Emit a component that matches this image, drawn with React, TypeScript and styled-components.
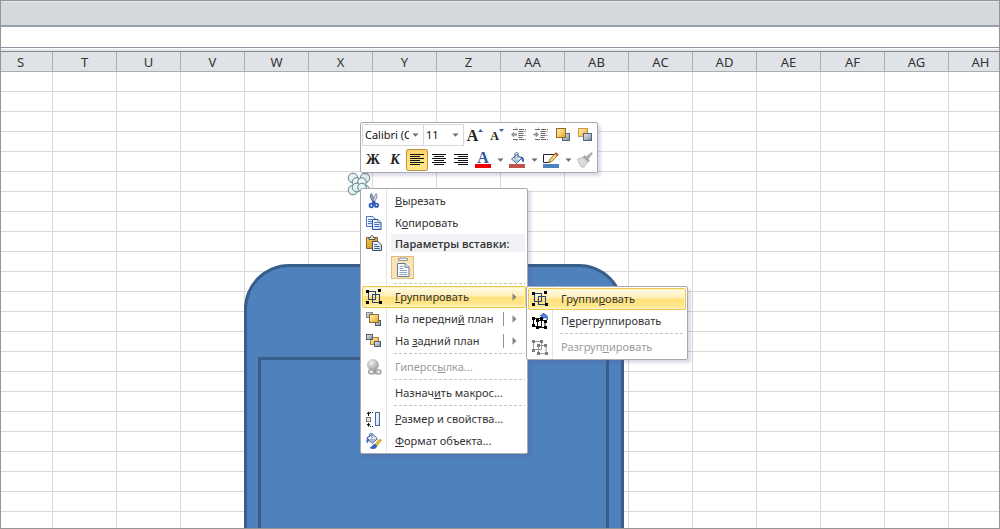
import React from "react";
import styled, { createGlobalStyle, css } from "styled-components";

const GlobalStyle = createGlobalStyle`
  *, *::before, *::after { box-sizing: border-box; }
  body { margin: 0; background: #fff; font-family: "Noto Sans", "Open Sans", sans-serif; color: #333; }
  button, select { font: inherit; color: inherit; margin: 0; padding: 0; border: 0; background: none; }
  svg { display: block; flex: none; }
`;

/* ---------- window and sheet ---------- */

const Window = styled.div`
  position: relative;
  display: flex;
  flex-direction: column;
  height: 100vh;
  overflow: hidden;
  border: 1px solid #959595;
`;

const Ribbon = styled.header`
  flex: none;
  height: 26px;
  background: #d5d8dd;
  border-top: 1px solid #e4e7ea;
  border-bottom: 2px solid #98a0aa;
`;

const FormulaBar = styled.div`
  flex: none;
  height: 21px;
  background: #fff;
  border-bottom: 1px solid #9093a0;
`;

const Splitter = styled.div`
  flex: none;
  height: 4px;
  background: #e6e6f0;
  border-top: 1px solid #fff;
  border-bottom: 1px solid #85868c;
`;

const Sheet = styled.main`
  flex: 1;
  min-height: 0;
  overflow: hidden;
`;

const Grid = styled.table`
  width: 1024px;
  margin-left: -12px;
  table-layout: fixed;
  border-collapse: separate;
  border-spacing: 0;
`;

const ColumnHead = styled.th`
  width: 64px;
  height: 20px;
  padding: 1px 0 0;
  background: #dfe2e6;
  border-right: 1px solid #a9adb3;
  border-bottom: 1px solid #a9adb3;
  font-size: 13px;
  line-height: 18px;
  font-weight: 400;
  text-align: center;
`;

const Cell = styled.td`
  height: 20px;
  padding: 0;
  border-right: 1px solid #d9d9d9;
  border-bottom: 1px solid #d9d9d9;
`;

/* ---------- drawn objects on the sheet ---------- */

const OuterShape = styled.div`
  position: absolute;
  left: 243px;
  top: 263px;
  bottom: 0;
  width: 380px;
  border: 3px solid #385d8a;
  border-bottom: 0;
  border-radius: 45px 45px 0 0;
  background: #4f81bd;
`;

const InnerShape = styled.div`
  position: absolute;
  left: 11px;
  top: 90px;
  bottom: 0;
  width: 351px;
  border: 3px solid #385d8a;
  border-bottom: 0;
`;

const SelectionHandle = styled.svg`
  position: absolute;
  left: 346px;
  top: 170px;
`;

/* ---------- popups ---------- */

const popup = css`
  position: absolute;
  background: #fff;
  border: 1px solid #a7abb0;
  border-radius: 2px;
  box-shadow: 3px 3px 3px rgba(90, 80, 140, 0.2);
`;

const MiniToolbar = styled.div`
  ${popup}
  left: 359px;
  top: 121px;
  padding: 1px;
  display: flex;
  flex-direction: column;
  gap: 3px;
`;

const ToolRow = styled.div`
  display: flex;
  align-items: center;
  height: 22px;
`;

const SelectBox = styled.label<{ $width: number }>`
  position: relative;
  display: flex;
  align-items: center;
  width: ${(p) => p.$width}px;
  height: 22px;
  border: 1px solid #d5d9de;
  & + & { border-left: 0; }
  svg { position: absolute; right: 4px; pointer-events: none; }
`;

const Select = styled.select`
  appearance: none;
  width: 100%;
  height: 20px;
  padding: 0 14px 0 2px;
  font-size: 11px;
  line-height: 20px;
  color: #111;
  outline: none;
`;

const ToolButton = styled.button<{ $active?: boolean; $narrow?: boolean }>`
  display: flex;
  align-items: center;
  justify-content: center;
  width: ${(p) => (p.$narrow ? 12 : 22)}px;
  height: 22px;
  border-radius: 2px;
  ${(p) =>
    p.$active &&
    css`
      border: 1px solid #c2923a;
      background: linear-gradient(#fbd46d, #fce07f 50%, #ffe68a);
    `}
`;

const Glyph = styled.span<{ $size: number; $italic?: boolean }>`
  font-family: "Liberation Serif", serif;
  font-size: ${(p) => p.$size}px;
  line-height: 20px;
  font-weight: 700;
  font-style: ${(p) => (p.$italic ? "italic" : "normal")};
  color: #222;
`;

const SizeGlyph = styled.span`
  display: flex;
  align-items: flex-start;
  padding-top: 1px;
  svg { margin-top: 3px; }
`;

const ColorGlyph = styled.span`
  display: flex;
  flex-direction: column;
  align-items: center;
  width: 16px;
  border-bottom: 4px solid #f00000;
  font-family: "Liberation Serif", serif;
  font-size: 16px;
  line-height: 12px;
  font-weight: 700;
  color: #2e55a0;
`;

const Menu = styled.div<{ $left: number; $top: number; $width: number }>`
  ${popup}
  left: ${(p) => p.$left}px;
  top: ${(p) => p.$top}px;
  width: ${(p) => p.$width}px;
  padding: 1px;
  background: linear-gradient(90deg, #fff 25px, #e2e4e7 25px, #e2e4e7 26px, #fff 26px);
`;

const Item = styled.button<{ $hot?: boolean }>`
  display: flex;
  align-items: center;
  width: 100%;
  height: 22px;
  padding: 0 8px 0 3px;
  border: 1px solid transparent;
  border-radius: 2px;
  font-size: 11px;
  line-height: 20px;
  text-align: left;
  white-space: nowrap;
  &:disabled { color: #9b9b9b; }
  ${(p) =>
    p.$hot &&
    css`
      border-color: #edc64b;
      background: linear-gradient(#fffbea, #fff0b5 45%, #ffe17a 50%, #ffe68c 85%, #fff3b8);
      box-shadow: inset 0 0 0 1px #fff4c4;
    `}
`;

const IconSlot = styled.span`
  flex: none;
  width: 29px;
  height: 16px;
`;

const Label = styled.span`
  flex: 1;
`;

const SplitMark = styled.span`
  width: 1px;
  height: 14px;
  margin-right: 8px;
  background: #8d939b;
`;

const Heading = styled.div`
  display: flex;
  align-items: center;
  height: 18px;
  padding-left: 4px;
  font-family: "Open Sans", "Noto Sans", sans-serif;
  font-size: 11px;
  font-weight: 600;
`;

const HeadingText = styled.span`
  flex: 1;
  margin-left: -4px;
  padding: 2px 0 0 4px;
  margin-right: 1px;
  background: #f0f2f5;
  line-height: 16px;
  white-space: nowrap;
`;

const PasteRow = styled.div`
  height: 30px;
  padding: 4px 0 0 29px;
`;

const PasteButton = styled.button`
  display: flex;
  align-items: center;
  justify-content: center;
  width: 23px;
  height: 23px;
  border: 1px solid #e3bd80;
  background: #fbe3b8;
`;

const Separator = styled.hr`
  height: 4px;
  margin: 0 1px 0 32px;
  border: 0;
  background: repeating-linear-gradient(90deg, #c5c5c5 0 3px, transparent 3px 5px) 0 1px / 100% 1px no-repeat;
`;

/* ---------- icons ---------- */

type IconProps = { children: React.ReactNode };
const Icon = ({ children }: IconProps) => (
  <svg width="16" height="16" viewBox="0 0 16 16" aria-hidden="true">
    {children}
  </svg>
);

const DefsSvg = styled.svg`
  position: absolute;
`;

const Gradients = () => (
  <DefsSvg width="0" height="0" aria-hidden="true">
    <defs>
      <linearGradient id="gold" x1="0" y1="0" x2="1" y2="1">
        <stop offset="0" stopColor="#fff0b8" />
        <stop offset="0.5" stopColor="#f8cf6c" />
        <stop offset="1" stopColor="#d99a22" />
      </linearGradient>
      <linearGradient id="board" x1="0" y1="0" x2="1" y2="1">
        <stop offset="0" stopColor="#f7cf55" />
        <stop offset="1" stopColor="#c0831c" />
      </linearGradient>
      <linearGradient id="steel" x1="0" y1="0" x2="1" y2="1">
        <stop offset="0" stopColor="#e8ecf1" />
        <stop offset="1" stopColor="#7e8a9b" />
      </linearGradient>
      <linearGradient id="paper" x1="0" y1="0" x2="1" y2="1">
        <stop offset="0" stopColor="#fff" />
        <stop offset="1" stopColor="#c3daf6" />
      </linearGradient>
      <radialGradient id="ball" cx="0.35" cy="0.3" r="0.75">
        <stop offset="0" stopColor="#f2f2f2" />
        <stop offset="1" stopColor="#9a9a9a" />
      </radialGradient>
      <radialGradient id="bubble" cx="0.45" cy="0.4" r="0.7">
        <stop offset="0" stopColor="#f0fbfc" />
        <stop offset="1" stopColor="#c9e9ee" />
      </radialGradient>
    </defs>
  </DefsSvg>
);

const Caret = () => (
  <svg width="7" height="4" viewBox="0 0 7 4" aria-hidden="true">
    <path d="M0.500 0.500h6L3.500 3.800z" fill="#6b6b6b" />
  </svg>
);

const SubmenuArrow = () => (
  <svg width="5" height="8" viewBox="0 0 5 8" aria-hidden="true">
    <path d="M0.500 0.300v7.400L4.500 4z" fill="#858585" />
  </svg>
);

const ScissorsIcon = () => (
  <Icon>
    <path d="M4.500 1l1.200-0.200L8.800 8l-1.500 1.500L4.300 4.500z" fill="#8fa0b8" stroke="#4f6482" strokeWidth="0.7" />
    <path d="M10.800 1L9.600 0.800 6.500 8l1.500 1.500 3-5z" fill="#d4dce7" stroke="#5b6d87" strokeWidth="0.7" />
    <path d="M8.600 8l-2.400 3M6.800 8l2.600 3" stroke="#2350a8" strokeWidth="2" />
    <circle cx="5.300" cy="12.500" r="1.800" fill="#dce8fa" stroke="#2f5bb7" strokeWidth="1.700" />
    <circle cx="10.500" cy="12.200" r="1.700" fill="#dce8fa" stroke="#2f5bb7" strokeWidth="1.700" />
  </Icon>
);

const CopyIcon = () => (
  <Icon>
    <path d="M0.500 1.500h6.500l2.500 2.500V11.500h-9z" fill="url(#paper)" stroke="#4f78bf" />
    <path d="M2 4.500h4M2 6.500h4M2 8.500h4" stroke="#4f7cc4" />
    <path d="M6.500 4.500h5.500l3 3v7H6.500z" fill="url(#paper)" stroke="#2b529a" />
    <path d="M12 4.500v3h3" fill="#fff" stroke="#2b529a" strokeWidth="0.800" />
    <path d="M8.200 7.500h3M8.200 9.500h5.200M8.200 11.500h5.200" stroke="#3f6fba" />
  </Icon>
);

const PasteIcon = () => (
  <Icon>
    <path d="M0.500 2.500h11v11h-11z" fill="url(#board)" stroke="#94641a" />
    <path d="M3 4.500V2.500h1.500c0-2.600 3-2.600 3 0H9v2z" fill="#dfe2e6" stroke="#4e4a42" strokeWidth="0.900" />
    <path d="M6.500 6.500h5.400l3.600 3.300v5.700h-9z" fill="url(#paper)" stroke="#3b4f73" />
    <path d="M8.200 9.500h3M8.200 11.500h5.600M8.200 13.500h5.600" stroke="#4d6188" />
  </Icon>
);

const PasteOptionIcon = () => (
  <svg width="18" height="22" viewBox="0 0 18 22" aria-hidden="true">
    <path d="M4.500 3.500V1.500h2.500c0-2.600 4-2.600 4 0h2.500v2z" fill="#f7f8f9" stroke="#83919b" strokeWidth="0.900" />
    <rect x="8.300" y="0.800" width="1.400" height="1.400" fill="#83919b" />
    <path d="M3.500 6.500h7.500l4 3.800v9.200H3.500z" fill="#fff" stroke="#5f789e" strokeWidth="1" />
    <path d="M11 6.500v3.800h4" fill="#dde7f3" stroke="#5f789e" strokeWidth="0.900" />
    <path d="M5.500 9.500h4M5.500 11.500h4M5.500 13.500h7.500M5.500 15.500h7.500M5.500 17.500h7.500" stroke="#8398ba" strokeWidth="0.900" />
  </svg>
);

const GroupIcon = () => (
  <Icon>
    <path d="M2.500 2.500h7v8h-7zM6.500 5.500h7v8h-7z" fill="none" stroke="#2b4472" strokeWidth="1.100" />
    <path d="M0 1h3v3H0zM12 0h3v3h-3zM0 12h3v3H0zM13 12h3v3h-3z" fill="#000" />
  </Icon>
);

const RegroupIcon = () => (
  <Icon>
    <path d="M1.500 5.500h8v8h-8zM5.500 7.500h7.500v7H5.500z" fill="#fff" stroke="#111" strokeWidth="1" />
    <path d="M0 4h3v3H0zM0 11h3v3H0zM8 4h3v3H8zM4 6h3v3H4zM12 7h3v3h-3zM4 13h3v3H4zM12 13h3v3h-3z" fill="#000" />
    <path d="M8.500 2.500L12 0v1.300c3 0 4.300 2.600 3.300 5.700-0.600-2-1.600-2.600-3.300-2.600V5.500z" fill="#4d83db" stroke="#2450a4" strokeWidth="0.700" />
  </Icon>
);

const UngroupIcon = () => (
  <Icon>
    <path d="M1.500 2.500h8v8h-8zM6.500 6.500h7.500v8H6.500z" fill="#fff" stroke="#999" strokeWidth="1" />
    <path d="M0 1h3v3H0zM8 1h3v3H8zM0 10h3v3H0zM5 5h3v3H5zM12 5h3v3h-3zM5 13h3v3H5zM13 13h3v3h-3z" fill="#7e7e7e" />
  </Icon>
);

const FrontIcon = () => (
  <Icon>
    <rect x="0.500" y="1.500" width="6" height="5" fill="url(#steel)" stroke="#7e8a9b" />
    <rect x="9.500" y="9.500" width="5" height="5" fill="url(#steel)" stroke="#4d5868" />
    <rect x="3.500" y="3.500" width="9" height="8" fill="url(#gold)" stroke="#8f6f30" />
  </Icon>
);

const BackIcon = () => (
  <Icon>
    <rect x="4.500" y="4.500" width="8" height="7" fill="url(#gold)" stroke="#b98426" />
    <rect x="0.500" y="1.500" width="6" height="5" fill="url(#steel)" stroke="#4f6078" />
    <rect x="8.500" y="8.500" width="6" height="5" fill="url(#steel)" stroke="#4f6078" />
  </Icon>
);

const HyperlinkIcon = () => (
  <Icon>
    <circle cx="7" cy="6" r="5.500" fill="url(#ball)" stroke="#b0b0b0" strokeWidth="0.600" />
    <rect x="2.500" y="10.800" width="6.500" height="4" rx="2" fill="#ebebeb" stroke="#999" strokeWidth="1.200" />
    <rect x="9" y="10.800" width="6" height="4" rx="2" fill="#ebebeb" stroke="#999" strokeWidth="1.200" />
    <path d="M6.500 12.800h5" stroke="#999" strokeWidth="1.200" />
  </Icon>
);

const SizeIcon = () => (
  <Icon>
    <rect x="9.500" y="1.500" width="4" height="13" fill="url(#paper)" stroke="#4a6797" />
    <rect x="0.500" y="6.500" width="4" height="4" fill="#e9e9e9" stroke="#777" />
    <path d="M2.500 1v4M2.500 12v3.500" stroke="#111" strokeWidth="1" />
    <path d="M0.500 3L2.500 0.500l2 2.500zM0.500 13l2 2.500 2-2.500z" fill="#111" />
    <path d="M4 1.500h4M4 15.500h4" stroke="#111" strokeDasharray="1 1" />
  </Icon>
);

const Bucket = () => (
  <>
    <path d="M2.500 7L8 2.500l4.500 4L7.500 11.500z" fill="#e4ebf5" stroke="#3d5c92" strokeWidth="1" />
    <path d="M4.500 7.500h6.500L7.500 10.500z" fill="#a9bbd6" />
    <path d="M6 7V2c0-2 3-2 3 0v4" fill="none" stroke="#4b6796" strokeWidth="1" />
    <path d="M11.500 4.500c3 0 4 2.300 3.300 6-1.800-0.600-2.300-2.200-2.300-4z" fill="#2f64bd" />
  </>
);

const FormatIcon = () => (
  <Icon>
    <path d="M1 4.800L6.500 1l5 4.700L6 10.500z" fill="#e4ebf5" stroke="#3d5c92" strokeWidth="1" />
    <path d="M3 6h7L6 9.500z" fill="#a3b4cf" />
    <path d="M3.500 4V1.200c0-1.300 2.500-1.300 2.500 0v4" fill="none" stroke="#5675a7" strokeWidth="1" />
    <path d="M1 5c-1.300 3-0.500 4 0.500 5.500L3 7.500z" fill="#3f73c9" />
    <path d="M15.600 7l-2.400-0.500L8.800 11.500l2 1.800z" fill="#f1bc36" stroke="#b27d16" strokeWidth="0.600" />
    <path d="M4 14.800c2.500-0.300 2.500-3.500 4.800-3.500l2 1.800c-0.500 2.700-4 3.200-6.800 1.700z" fill="#2e67c8" stroke="#1f4793" strokeWidth="0.600" />
  </Icon>
);

const FillIcon = () => (
  <Icon>
    <Bucket />
    <path d="M0 12h16v4H0z" fill="#c0504d" />
  </Icon>
);

const OutlineIcon = () => (
  <Icon>
    <path d="M0.500 2.500h11.500L5.500 10.500h-5z" fill="#fff" stroke="#222" />
    <path d="M12.800 0.600l2.600 2-6.600 7-3 1.200 0.700-3z" fill="#f6cf6a" stroke="#6b5220" strokeWidth="0.700" />
    <path d="M12.800 0.600l2.600 2-1.400 1.600-2.500-2.100z" fill="#cf5b4c" />
    <path d="M0 12h16v4H0z" fill="#4f81bd" />
  </Icon>
);

const BrushIcon = () => (
  <Icon>
    <path d="M15.500 1.300l-1-0.900-5 4.200 2 2z" fill="#b5b5b5" stroke="#9a9a9a" strokeWidth="0.700" />
    <path d="M7.500 3.600l5.200 4.800-1.500 1.400-5.200-4.800z" fill="#a8a8a8" stroke="#939393" strokeWidth="0.600" />
    <path d="M6 5L0.500 7l3 7.500 3.200 1L11.200 9.800z" fill="#d2d2d2" stroke="#b3b3b3" strokeWidth="0.600" />
    <path d="M2.500 7.500l3 5.500M4.500 6.500l3 5" stroke="#eee" strokeWidth="1" />
  </Icon>
);

const ForwardIcon = () => (
  <Icon>
    <rect x="7.500" y="6.500" width="7" height="7" fill="url(#steel)" stroke="#56657b" />
    <rect x="1.500" y="1.500" width="9" height="9" fill="url(#gold)" stroke="#8f6d29" />
  </Icon>
);

const BackwardIcon = () => (
  <Icon>
    <rect x="1.500" y="1.500" width="9" height="8" fill="url(#gold)" stroke="#c99a45" />
    <rect x="6.500" y="6.500" width="8" height="7" fill="url(#steel)" stroke="#56657b" />
  </Icon>
);

const IndentIcon = ({ increase }: { increase?: boolean }) => (
  <Icon>
    <path d="M2 2.500h13M7.500 4.500h7M7.500 6.500h5M7.500 8.500h7M7.500 10.500h4M2 12.500h13" stroke="#666" strokeDasharray="5 1" />
    <path d={increase ? "M6 7.500L2.800 4.500v2H0.500v2h2.300v2z" : "M0 7.500L3.200 4.500v2H6v2H3.200v2z"} fill="#929292" />
    <path d="M5.500 0.500v2M5.500 12.500v2" stroke="#999" strokeDasharray="1 1" />
  </Icon>
);

const AlignIcon = ({ side }: { side: "left" | "center" | "right" }) => (
  <Icon>
    {[14, 10, 14, 10, 14, 10].map((w, i) => {
      const x = side === "left" ? 1 : side === "right" ? 15 - w : 8 - w / 2;
      return <rect key={i} x={x} y={2 + i * 2} width={w} height="1" fill="#111" />;
    })}
  </Icon>
);

const Triangle = ({ down }: { down?: boolean }) => (
  <svg width="5" height="3" viewBox="0 0 5 3" aria-hidden="true">
    <path d={down ? "M0 0h5L2.500 3z" : "M0 3h5L2.500 0z"} fill="#3a5fae" />
  </svg>
);

/* ---------- menu parts ---------- */

const Mnemonic = ({ text }: { text: string }) => {
  const at = text.indexOf("_");
  if (at < 0) return <Label>{text}</Label>;
  return (
    <Label>
      {text.slice(0, at)}
      <u>{text[at + 1]}</u>
      {text.slice(at + 2)}
    </Label>
  );
};

type MenuItemProps = {
  icon?: React.ReactNode;
  text: string;
  hot?: boolean;
  disabled?: boolean;
  submenu?: boolean;
  split?: boolean;
};

const MenuItem = ({ icon, text, hot, disabled, submenu, split }: MenuItemProps) => (
  <Item type="button" role="menuitem" $hot={hot} disabled={disabled}>
    <IconSlot>{icon}</IconSlot>
    <Mnemonic text={text} />
    {split && <SplitMark />}
    {submenu && <SubmenuArrow />}
  </Item>
);

const columns = ["S", "T", "U", "V", "W", "X", "Y", "Z", "AA", "AB", "AC", "AD", "AE", "AF", "AG", "AH"];
const rows = Array.from({ length: 23 }, (_, i) => i);

const ColorTool = ({ label, children }: { label: string; children: React.ReactNode }) => (
  <>
    <ToolButton type="button" aria-label={label}>
      {children}
    </ToolButton>
    <ToolButton type="button" $narrow aria-label={`${label}: палитра`}>
      <Caret />
    </ToolButton>
  </>
);

export default function App() {
  return (
    <Window>
      <GlobalStyle />
      <Gradients />
      <Ribbon />
      <FormulaBar />
      <Splitter />
      <Sheet>
        <Grid>
          <thead>
            <tr>
              {columns.map((c) => (
                <ColumnHead key={c} scope="col">
                  {c}
                </ColumnHead>
              ))}
            </tr>
          </thead>
          <tbody>
            {rows.map((r) => (
              <tr key={r}>
                {columns.map((c) => (
                  <Cell key={c} />
                ))}
              </tr>
            ))}
          </tbody>
        </Grid>
      </Sheet>

      <OuterShape>
        <InnerShape />
      </OuterShape>

      <SelectionHandle width="26" height="26" viewBox="0 0 26 26" aria-hidden="true">
        <g fill="url(#bubble)" stroke="#6b8086" strokeWidth="1">
          <circle cx="6" cy="7" r="4.800" />
          <circle cx="18" cy="7" r="4.800" />
          <circle cx="6" cy="19" r="4.800" />
          <circle cx="18" cy="19" r="4.800" />
          <circle cx="9.500" cy="11" r="4.300" />
          <circle cx="15" cy="11" r="4.300" />
          <circle cx="9.500" cy="16.500" r="4.300" />
          <circle cx="15" cy="16.500" r="4.300" />
        </g>
      </SelectionHandle>

      <MiniToolbar role="toolbar" aria-label="Форматирование">
        <ToolRow>
          <SelectBox $width={62}>
            <Select aria-label="Шрифт" defaultValue="calibri">
              <option value="calibri">Calibri (Основной текст)</option>
            </Select>
            <Caret />
          </SelectBox>
          <SelectBox $width={40}>
            <Select aria-label="Размер шрифта" defaultValue="11">
              <option value="11">11</option>
            </Select>
            <Caret />
          </SelectBox>
          <ToolButton type="button" aria-label="Увеличить размер">
            <SizeGlyph>
              <Glyph $size={16}>A</Glyph>
              <Triangle />
            </SizeGlyph>
          </ToolButton>
          <ToolButton type="button" aria-label="Уменьшить размер">
            <SizeGlyph>
              <Glyph $size={12}>A</Glyph>
              <Triangle down />
            </SizeGlyph>
          </ToolButton>
          <ToolButton type="button" aria-label="Уменьшить отступ">
            <IndentIcon />
          </ToolButton>
          <ToolButton type="button" aria-label="Увеличить отступ">
            <IndentIcon increase />
          </ToolButton>
          <ToolButton type="button" aria-label="Переместить вперед">
            <ForwardIcon />
          </ToolButton>
          <ToolButton type="button" aria-label="Переместить назад">
            <BackwardIcon />
          </ToolButton>
        </ToolRow>
        <ToolRow>
          <ToolButton type="button">
            <Glyph $size={14}>Ж</Glyph>
          </ToolButton>
          <ToolButton type="button">
            <Glyph $size={14} $italic>
              К
            </Glyph>
          </ToolButton>
          <ToolButton type="button" $active aria-label="По левому краю">
            <AlignIcon side="left" />
          </ToolButton>
          <ToolButton type="button" aria-label="По центру">
            <AlignIcon side="center" />
          </ToolButton>
          <ToolButton type="button" aria-label="По правому краю">
            <AlignIcon side="right" />
          </ToolButton>
          <ColorTool label="Цвет текста">
            <ColorGlyph>A</ColorGlyph>
          </ColorTool>
          <ColorTool label="Заливка">
            <FillIcon />
          </ColorTool>
          <ColorTool label="Контур">
            <OutlineIcon />
          </ColorTool>
          <ToolButton type="button" aria-label="Формат по образцу">
            <BrushIcon />
          </ToolButton>
        </ToolRow>
      </MiniToolbar>

      <Menu role="menu" $left={359} $top={187} $width={168}>
        <MenuItem icon={<ScissorsIcon />} text="_Вырезать" />
        <MenuItem icon={<CopyIcon />} text="К_опировать" />
        <Heading>
          <IconSlot>
            <PasteIcon />
          </IconSlot>
          <HeadingText>Параметры вставки:</HeadingText>
        </Heading>
        <PasteRow>
          <PasteButton type="button" aria-label="Вставить">
            <PasteOptionIcon />
          </PasteButton>
        </PasteRow>
        <Separator />
        <MenuItem icon={<GroupIcon />} text="_Группировать" hot submenu />
        <MenuItem icon={<FrontIcon />} text="На передни_й план" split submenu />
        <MenuItem icon={<BackIcon />} text="На _задний план" split submenu />
        <Separator />
        <MenuItem icon={<HyperlinkIcon />} text="Гиперсс_ылка..." disabled />
        <Separator />
        <MenuItem text="Назнач_ить макрос..." />
        <Separator />
        <MenuItem icon={<SizeIcon />} text="_Размер и свойства..." />
        <MenuItem icon={<FormatIcon />} text="_Формат объекта..." />
      </Menu>

      <Menu role="menu" $left={525} $top={285} $width={162}>
        <MenuItem icon={<GroupIcon />} text="Группи_ровать" hot />
        <MenuItem icon={<RegroupIcon />} text="П_ерегруппировать" />
        <Separator />
        <MenuItem icon={<UngroupIcon />} text="Разгруп_пировать" disabled />
      </Menu>
    </Window>
  );
}
